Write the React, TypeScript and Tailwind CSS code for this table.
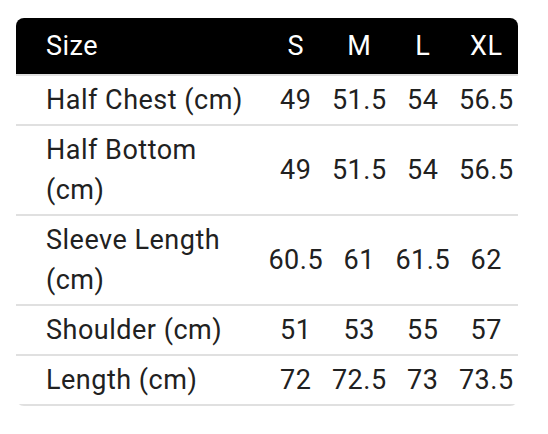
import React from 'react';

const sizes = ['S', 'M', 'L', 'XL'];

const rows: { label: string; values: string[] }[] = [
  { label: 'Half Chest (cm)', values: ['49', '51.5', '54', '56.5'] },
  { label: 'Half Bottom (cm)', values: ['49', '51.5', '54', '56.5'] },
  { label: 'Sleeve Length (cm)', values: ['60.5', '61', '61.5', '62'] },
  { label: 'Shoulder (cm)', values: ['51', '53', '55', '57'] },
  { label: 'Length (cm)', values: ['72', '72.5', '73', '73.5'] },
];

const cols = 'grid grid-cols-[248px_repeat(4,63.5px)]';

const App: React.FC = () => {
  return (
    <div className="min-h-screen bg-white pt-[18px] px-4 font-['Roboto',sans-serif] text-[27px] leading-[40px] tracking-[0.5px] text-[#212121]">
      <div className="w-[502px] rounded-lg overflow-hidden">
        <div className={`${cols} bg-black text-white py-2 border-b-2 border-[#e0e0e0]`}>
          <div className="pl-[30px]">Size</div>
          {sizes.map(s => (
            <div key={s} className="text-center">{s}</div>
          ))}
        </div>
        {rows.map(row => (
          <div key={row.label} className={`${cols} items-center py-1 border-b-2 border-[#e0e0e0]`}>
            <div className="pl-[30px] pr-2">{row.label}</div>
            {row.values.map((v, i) => (
              <div key={i} className="text-center">{v}</div>
            ))}
          </div>
        ))}
      </div>
    </div>
  );
};

export default App;
